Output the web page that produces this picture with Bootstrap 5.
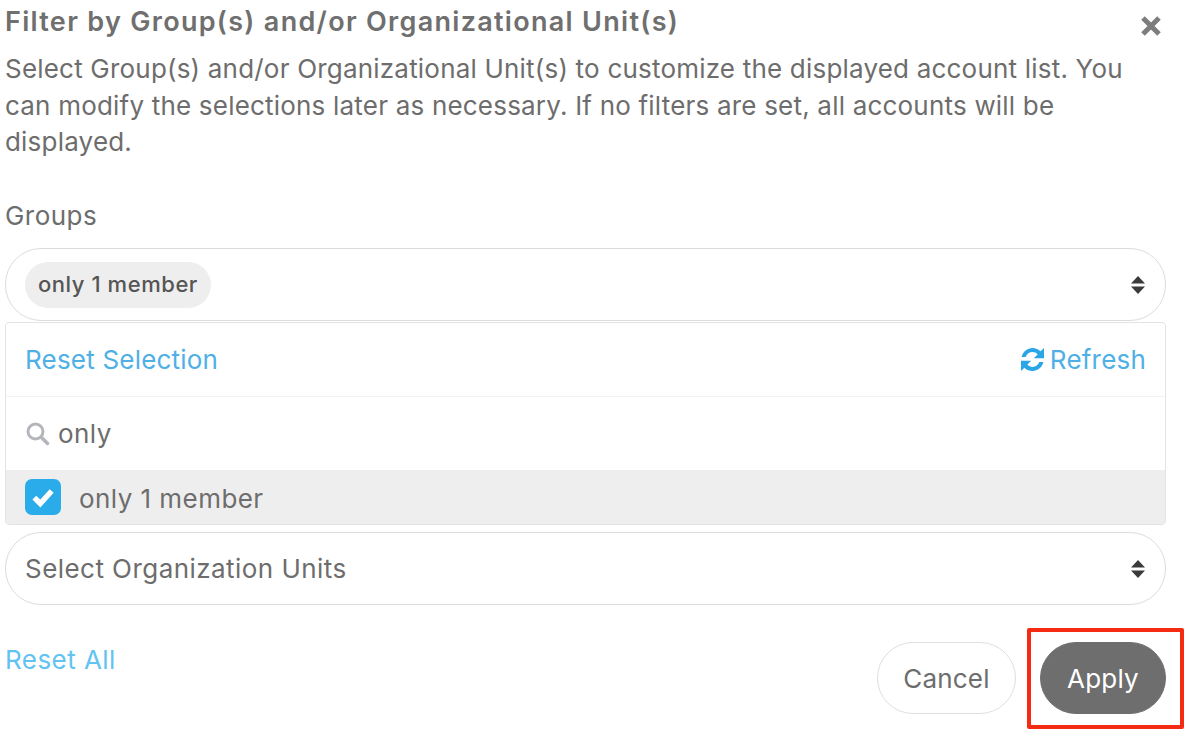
<!DOCTYPE html>
<html lang="en">

<head>
    <meta charset="UTF-8">
    <meta name="viewport" content="width=device-width, initial-scale=1.0">
    <title>Filter by Groups</title>
    <link href="https://cdn.jsdelivr.net/npm/bootstrap@5.3.0/dist/css/bootstrap.min.css" rel="stylesheet">
    <style>
        html, body {
            height: 741px;
            overflow: hidden;
        }

        body {
            font-family: Inter, "Open Sans", sans-serif;
            font-size: 26px;
            letter-spacing: 0.45px;
            color: #6d6d6d;
            background: #fff;
        }

        .filter-wrap {
            width: 1161px;
            margin-left: 5px;
        }

        .filter-title {
            font-size: 27px;
            font-weight: 600;
            letter-spacing: 1.3px;
            line-height: 32px;
            height: 51px;
            padding-top: 6px;
            color: #6f6f6f;
            margin: 0;
        }

        .filter-close {
            width: 22px;
            height: 22px;
            margin: 15px 4px 0 0;
        }

        .filter-text {
            line-height: 36.6px;
            height: 110px;
            margin: 0;
            width: 1130px;
            letter-spacing: 0.2px;
        }

        .filter-label {
            margin-top: 39px;
            line-height: 32px;
            height: 48px;
        }

        .pill-select {
            height: 73px;
            padding: 0 19px;
            border: 1px solid #dcdcdc;
            border-radius: 36px;
        }

        .pill-select.second {
            margin-top: 7px;
        }

        .picked-chip {
            height: 46px;
            padding: 0 13px;
            background: #eeeeee;
            border-radius: 23px;
            font-size: 22px;
            font-weight: 500;
            letter-spacing: 0.55px;
            color: #555;
        }

        .drop-panel {
            margin-top: 1px;
            height: 203px;
            border: 1px solid #e3e3e3;
            border-radius: 4px;
            overflow: hidden;
        }

        .drop-head {
            height: 74px;
            padding: 0 19px;
            border-bottom: 1px solid #f3f3f3;
            color: #4fb0e6;
            letter-spacing: 0.2px;
        }

        .refresh-link {
            column-gap: 6px;
        }

        .drop-search {
            height: 73px;
            padding: 0 19px;
        }

        .drop-option {
            height: 54px;
            padding: 0 19px;
            background: #eeeeee;
            column-gap: 18px;
        }

        .drop-option-name {
            padding-top: 3px;
        }

        .drop-check {
            width: 36px;
            height: 36px;
            border-radius: 7px;
            background: #2aabea;
        }

        .filter-foot {
            margin-top: 37px;
        }

        .reset-all {
            color: #62c3f3;
            line-height: 36px;
        }

        .pill-btn {
            height: 72px;
            border-radius: 36px;
            font-size: 26px;
            letter-spacing: 0.2px;
            color: #6d6d6d;
            background: #fff;
            border: 1px solid #dfdfdf;
            padding: 0;
        }

        .pill-btn.cancel-btn {
            width: 139px;
        }

        .pill-btn.apply-btn {
            width: 126px;
            background: #6e6e6e;
            border-color: #6e6e6e;
            color: #fff;
        }

        .apply-mark {
            position: absolute;
            top: -14px;
            left: -13px;
            width: 157px;
            height: 101px;
            border: 4px solid #f52a12;
            border-radius: 2px;
            pointer-events: none;
        }
    </style>
</head>

<body>
    <div class="filter-wrap">
        <div class="d-flex justify-content-between align-items-start">
            <h5 class="filter-title">Filter by Group(s) and/or Organizational Unit(s)</h5>
            <svg class="filter-close" viewBox="0 0 22 22">
                <path d="M3 3 19 19M19 3 3 19" stroke="#7d7d7d" stroke-width="5" />
            </svg>
        </div>
        <p class="filter-text">Select Group(s) and/or Organizational Unit(s) to customize the displayed account list. You can modify the selections later as necessary. If no filters are set, all accounts will be displayed.</p>
        <div class="filter-label">Groups</div>

        <div class="pill-select d-flex align-items-center justify-content-between">
            <span class="picked-chip d-flex align-items-center">only 1 member</span>
            <svg width="16" height="18" viewBox="0 0 16 18">
                <path d="M8 0 15 7.500H1ZM8 18 1 10.500H15Z" fill="#3a3a3a" />
            </svg>
        </div>

        <div class="drop-panel">
            <div class="drop-head d-flex align-items-center justify-content-between">
                <span>Reset Selection</span>
                <span class="refresh-link d-flex align-items-center">
                    <svg width="23" height="23" viewBox="3 3 18 18">
                        <path d="M3.500 10C4.500 5.800 8 3 12 3c2.500 0 4.700 1 6.300 2.600L21 3v8h-8l3-3c-1-1.100-2.400-1.800-4-1.800-2.500 0-4.600 1.600-5.300 3.800ZM20.500 14c-1 4.200-4.500 7-8.500 7-2.500 0-4.700-1-6.300-2.600L3 21v-8h8l-3 3c1 1.100 2.400 1.800 4 1.800 2.500 0 4.600-1.600 5.300-3.800Z" fill="#2aa5e6" />
                    </svg>
                    Refresh
                </span>
            </div>
            <div class="drop-search d-flex align-items-center gap-2">
                <svg width="25" height="25" viewBox="0 0 25 25">
                    <circle cx="10.500" cy="10.500" r="7.500" fill="none" stroke="#b4b6bb" stroke-width="3" />
                    <path d="M16 16 22.500 22.500" stroke="#b4b6bb" stroke-width="3.500" stroke-linecap="round" />
                </svg>
                <span>only</span>
            </div>
            <div class="drop-option d-flex align-items-center">
                <span class="drop-check d-flex align-items-center justify-content-center">
                    <svg width="26" height="22" viewBox="0 0 24 20">
                        <path d="M4 10.500 9.500 16 20 4.500" fill="none" stroke="#fff" stroke-width="5" />
                    </svg>
                </span>
                <span class="drop-option-name">only 1 member</span>
            </div>
        </div>

        <div class="pill-select second d-flex align-items-center justify-content-between">
            <span>Select Organization Units</span>
            <svg width="16" height="18" viewBox="0 0 16 18">
                <path d="M8 0 15 7.500H1ZM8 18 1 10.500H15Z" fill="#3a3a3a" />
            </svg>
        </div>

        <div class="filter-foot d-flex justify-content-between align-items-start">
            <span class="reset-all">Reset All</span>
            <div class="d-flex gap-4">
                <button type="button" class="btn pill-btn cancel-btn">Cancel</button>
                <div class="position-relative">
                    <button type="button" class="btn pill-btn apply-btn">Apply</button>
                    <div class="apply-mark"></div>
                </div>
            </div>
        </div>
    </div>

    <script src="https://cdn.jsdelivr.net/npm/bootstrap@5.3.0/dist/js/bootstrap.bundle.min.js"></script>
</body>

</html>
